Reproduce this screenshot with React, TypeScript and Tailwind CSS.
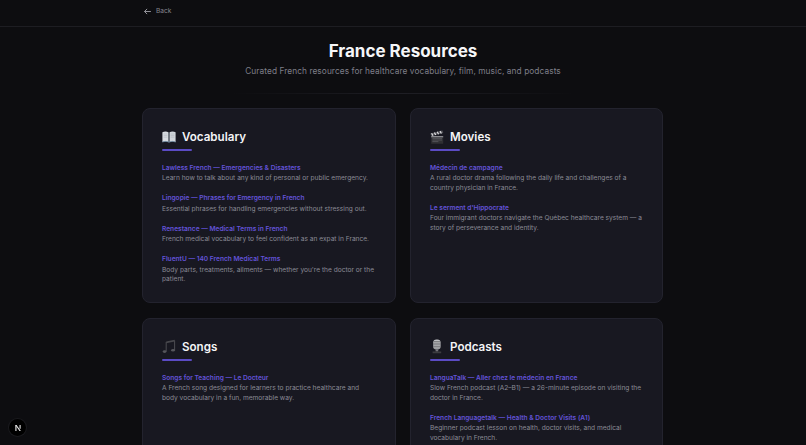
import React from "react";

const Book = () => (
  <svg width="14" height="14" viewBox="0 0 14 14">
    <path d="M.4 2.2C2.4 1.4 5 1.4 6.6 2.4V12C5 11.2 2.4 11.2.4 12z" fill="#d9dde2" />
    <path d="M13.6 2.2C11.6 1.4 9 1.4 7.4 2.4V12C9 11.2 11.6 11.2 13.6 12z" fill="#d2d6dc" />
    <path d="M1.6 4h3.8M1.6 5.6h3.8M1.6 7.2h3.8M8.6 4h3.8M8.6 5.6h3.8M8.6 7.2h3.8" stroke="#aab0b8" strokeWidth=".5" />
    <path d="M6.6 2.4h.8V12.4h-.8z" fill="#55606c" />
    <path d="M.4 12c2-.8 4.6-.8 6.6.2 2-1 4.6-1 6.6-.2" stroke="#6f8ba3" strokeWidth=".8" fill="none" />
  </svg>
);
const Clapper = () => (
  <svg width="14" height="14" viewBox="0 0 14 14">
    <rect x="1.2" y="6.2" width="12" height="7.6" rx=".6" fill="#2f2f33" />
    <path d="M2.4 8.4h9.6M2.4 10h9.6M2.4 11.6h6" stroke="#77777c" strokeWidth=".5" />
    <path d="M.4 3.6 12.4.4l.9 2.6-12 3z" fill="#54545a" />
    <path d="M1.6 3.3 3 5.7M4.4 2.6l1.4 2.4M7.2 1.8l1.4 2.4M10 1.1l1.4 2.4" stroke="#e3e3e6" strokeWidth="1.1" />
    <path d="M1.2 6.2h12v1h-12z" fill="#a9a9ae" />
  </svg>
);
const Notes = () => (
  <svg width="14" height="15" viewBox="0 0 14 15">
    <path d="M4.2 3V12.4M12.6 1.4V11" stroke="#5a5a60" strokeWidth=".8" fill="none" />
    <path d="M4.2 2.4 12.6.8V2.6L4.2 4.2z" fill="#47474c" />
    <ellipse cx="2.6" cy="12.6" rx="1.9" ry="1.3" fill="#56565c" />
    <ellipse cx="11" cy="11.2" rx="1.9" ry="1.3" fill="#56565c" />
  </svg>
);
const Mic = () => (
  <svg width="14" height="15" viewBox="0 0 14 15">
    <rect x="3.2" y=".4" width="7.4" height="10" rx="3.2" fill="#bfc0c4" />
    <path d="M3.6 2.6h6.6M3.2 4.2h7.4M3.2 5.8h7.4M3.2 7.4h7.4M3.6 9h6.6" stroke="#5b5b60" strokeWidth=".7" />
    <path d="M5.6 10.4h2.6v2H5.6z" fill="#77777c" />
    <path d="M2.6 12.4h8.6v1.8H2.6z" fill="#3c3c40" />
  </svg>
);

type Item = { t: string; d: React.ReactNode };
const Card = ({ icon, title, items }: { icon: React.ReactNode; title: string; items: Item[] }) => (
  <div className="rounded-[8px] border border-[#23232e] bg-[#181821] px-[19px] pt-[17.5px] h-[195px] overflow-hidden">
    <div className="flex items-center h-[20px]">
      <span className="w-[20px] flex items-center">{icon}</span>
      <span className="text-[11.6px] font-semibold text-[#f4f4f6] leading-[20px]">{title}</span>
    </div>
    <div className="mt-[2.5px] h-[2px] w-[30px] rounded-full bg-[#5b4bc4]" />
    <div className="mt-[11.5px] flex flex-col gap-[9.5px]">
      {items.map((i) => (
        <div key={i.t}>
          <div className="text-[6.6px] font-semibold leading-[11.5px] text-[#6353d8]">{i.t}</div>
          <div className="text-[6.6px] leading-[9.6px] text-[#8b8b96]">{i.d}</div>
        </div>
      ))}
    </div>
  </div>
);

export default function App() {
  return (
    <div className="h-[445px] overflow-hidden bg-[#0d0d10] font-['Inter',sans-serif] antialiased relative">
      <div className="h-[27px] border-b border-[#1d1d22]">
        <div className="mx-auto w-[522px] h-[23px] flex items-center gap-[4px] pl-[1px] text-[6.6px] text-[#85858e]">
          <svg width="9" height="9" viewBox="0 0 24 24" fill="none" stroke="#a0a0a8" strokeWidth="2.4"><path d="M21 12H4M11 5l-7 7 7 7" /></svg>
          <span>Back</span>
        </div>
      </div>
      <div className="mx-auto w-[522px]">
        <h1 className="mt-[14px] text-center text-[17px] font-bold leading-[20px] text-[#f6f6f8]">France Resources</h1>
        <p className="mt-[3px] text-center text-[8.3px] leading-[14px] tracking-[0.08px] text-[#7f7f89]">Curated French resources for healthcare vocabulary, film, music, and podcasts</p>
        <div className="mx-auto mt-[15px] h-px w-[345px] bg-gradient-to-r from-transparent via-[#1e1e24] to-transparent" />
        <div className="mt-[14px] grid grid-cols-[254px_253px] gap-x-[14px] gap-y-[15px]">
          <Card icon={<Book />} title="Vocabulary" items={[
            { t: "Lawless French — Emergencies & Disasters", d: "Learn how to talk about any kind of personal or public emergency." },
            { t: "Lingopie — Phrases for Emergency in French", d: "Essential phrases for handling emergencies without stressing out." },
            { t: "Renestance — Medical Terms in French", d: "French medical vocabulary to feel confident as an expat in France." },
            { t: "FluentU — 140 French Medical Terms", d: <>Body parts, treatments, ailments — whether you're the doctor or the<br />patient.</> },
          ]} />
          <Card icon={<Clapper />} title="Movies" items={[
            { t: "Médecin de campagne", d: <>A rural doctor drama following the daily life and challenges of a<br />country physician in France.</> },
            { t: "Le serment d'Hippocrate", d: <>Four immigrant doctors navigate the Québec healthcare system — a<br />story of perseverance and identity.</> },
          ]} />
          <Card icon={<Notes />} title="Songs" items={[
            { t: "Songs for Teaching — Le Docteur", d: <>A French song designed for learners to practice healthcare and<br />body vocabulary in a fun, memorable way.</> },
          ]} />
          <Card icon={<Mic />} title="Podcasts" items={[
            { t: "LanguaTalk — Aller chez le médecin en France", d: <>Slow French podcast (A2–B1) — a 26-minute episode on visiting the<br />doctor in France.</> },
            { t: "French Languagetalk — Health & Doctor Visits (A1)", d: <>Beginner podcast lesson on health, doctor visits, and medical<br />vocabulary in French.</> },
          ]} />
        </div>
      </div>
      <div className="absolute left-[9px] top-[419px] h-[17px] w-[17px] rounded-full bg-black ring-1 ring-[#1a1a1e] flex items-center justify-center">
        <svg width="8" height="8" viewBox="0 0 24 24"><path d="M4 3h3.5v18H4zM16.5 3H20v11h-3.5z" fill="#ddd" /><path d="M4 3h3.5l13 18h-4z" fill="#eee" /></svg>
      </div>
    </div>
  );
}
